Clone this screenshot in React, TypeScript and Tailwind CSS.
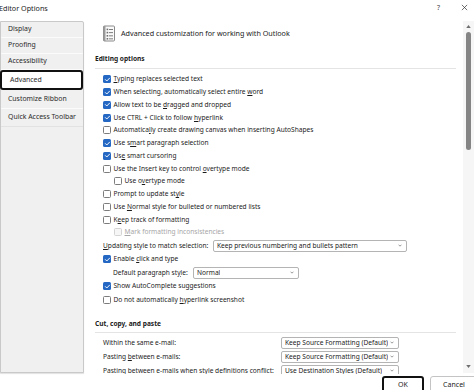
import React from 'react'

type Row =
  | { kind: 'check'; label: React.ReactNode; checked?: boolean; indent?: boolean; disabled?: boolean }
  | { kind: 'select'; label: React.ReactNode; value: string; indent?: boolean; labelW: string; selW: string }

const font = { fontFamily: '"Segoe UI", "Noto Sans", sans-serif' }

function Box({ checked, disabled }: { checked?: boolean; disabled?: boolean }) {
  if (checked) {
    return (
      <span className="w-[8px] h-[8px] shrink-0 rounded-[1.5px] bg-[#2468c4] flex items-center justify-center">
        <svg viewBox="0 0 8 8" className="w-[7px] h-[7px]">
          <path d="M1.6 4.1 L3.2 5.7 L6.4 2.4" stroke="white" strokeWidth="1.1" fill="none" strokeLinecap="round" strokeLinejoin="round" />
        </svg>
      </span>
    )
  }
  return (
    <span
      className={`w-[8px] h-[8px] shrink-0 rounded-[1.5px] border ${
        disabled ? 'border-[#d4d4d4] bg-[#f6f6f6]' : 'border-[#7c7c7c] bg-white'
      }`}
    />
  )
}

function Chevron() {
  return (
    <svg viewBox="0 0 6 4" className="w-[4px] h-[3px] shrink-0">
      <path d="M0.8 0.8 L3 3 L5.2 0.8" stroke="#555" strokeWidth="0.9" fill="none" />
    </svg>
  )
}

function Select({ value, className }: { value: string; className: string }) {
  return (
    <div
      className={`${className} h-[12px] border border-[#b4b4b4] rounded-[2px] bg-white flex items-center justify-between pl-[3px] pr-[4px] text-[#1a1a1a]`}
    >
      <span className="whitespace-nowrap overflow-hidden">{value}</span>
      <Chevron />
    </div>
  )
}

const editing: Row[] = [
  { kind: 'check', checked: true, label: <><u>T</u>yping replaces selected text</> },
  { kind: 'check', checked: true, label: <>When selecting, automatically select entire <u>w</u>ord</> },
  { kind: 'check', checked: true, label: <>Allow text to be <u>d</u>ragged and dropped</> },
  { kind: 'check', checked: true, label: <>Use CTRL + Click to follow <u>h</u>yperlink</> },
  { kind: 'check', label: <>Automatica<u>l</u>ly create drawing canvas when inserting AutoShapes</> },
  { kind: 'check', checked: true, label: <>Use s<u>m</u>art paragraph selection</> },
  { kind: 'check', checked: true, label: <>Us<u>e</u> smart cursoring</> },
  { kind: 'check', label: <>Use the Insert key to control <u>o</u>vertype mode</> },
  { kind: 'check', indent: true, label: <>Use o<u>v</u>ertype mode</> },
  { kind: 'check', label: <>Prompt to update st<u>y</u>le</> },
  { kind: 'check', label: <>Use <u>N</u>ormal style for bulleted or numbered lists</> },
  { kind: 'check', label: <>K<u>e</u>ep track of formatting</> },
  { kind: 'check', indent: true, disabled: true, label: <><u>M</u>ark formatting inconsistencies</> },
]

export default function App() {
  return (
    <div className="w-[474px] h-[390px] bg-white overflow-hidden flex flex-col text-[6.6px] text-[#1b1b1b]" style={font}>
      {/* Title bar */}
      <div className="h-[21px] shrink-0 flex items-start pt-[3px]">
        <span className="text-[7.2px] text-[#1b1b1b] -ml-[1px] leading-[10px]">Editor Options</span>
        <span className="ml-auto text-[7px] text-[#444] leading-[10px]">?</span>
        <span className="ml-[21px] mr-[6px] text-[#444] leading-[10px]">
          <svg viewBox="0 0 8 8" className="w-[7px] h-[7px] mt-[1px]">
            <path d="M1 1 L7 7 M7 1 L1 7" stroke="#333" strokeWidth="0.8" />
          </svg>
        </span>
      </div>

      {/* Body */}
      <div className="h-[353px] shrink-0 flex">
        {/* Sidebar */}
        <div className="w-[84px] h-[352px] shrink-0 bg-[#f0f0f0] border border-[#c9c9c9] rounded-tr-[2px] shadow-[0_1px_1px_rgba(0,0,0,0.12)] flex flex-col text-[6.9px] text-[#2b2b2b]">
          <div className="h-[16px] flex items-center pl-[7px] border-b border-[#fbfbfb]">Display</div>
          <div className="h-[16px] flex items-center pl-[7px] border-b border-[#fbfbfb]">Proofing</div>
          <div className="h-[16px] flex items-center pl-[7px] border-b border-[#fbfbfb]">Accessibility</div>
          <div className="h-[20px] -ml-[1px] flex items-center pl-[8px] bg-white border-2 border-[#111] rounded-[3px]">Advanced</div>
          <div className="h-[19px] flex items-center pl-[7px] border-b border-[#fbfbfb]">Customize Ribbon</div>
          <div className="h-[18px] flex items-center pl-[7px] border-b border-[#e2e2e2]">Quick Access Toolbar</div>
        </div>

        {/* Main pane */}
        <div className="flex-1 flex overflow-hidden">
          <div className="flex-1 overflow-hidden pl-[11px] pr-[7px] flex flex-col">
            {/* Header */}
            <div className="mt-[3px] h-[18px] shrink-0 flex items-center pl-[7px] gap-[5px]">
              <svg viewBox="0 0 14 17" className="w-[14px] h-[17px]">
                <rect x="1.5" y="1" width="11" height="15" rx="1" fill="#fafafa" stroke="#7d7d7d" strokeWidth="0.9" />
                <rect x="1.5" y="1" width="2" height="15" fill="#9a9a9a" />
                <rect x="4.6" y="3.6" width="1.6" height="1.6" fill="#6f6f6f" />
                <rect x="7" y="4" width="4" height="0.9" fill="#6f6f6f" />
                <rect x="4.6" y="6.8" width="1.6" height="1.6" fill="#6f6f6f" />
                <rect x="7" y="7.2" width="4" height="0.9" fill="#6f6f6f" />
                <rect x="4.6" y="10" width="1.6" height="1.6" fill="#6f6f6f" />
                <rect x="7" y="10.4" width="4" height="0.9" fill="#6f6f6f" />
                <rect x="4.6" y="13" width="1.6" height="1.6" fill="#6f6f6f" />
                <rect x="7" y="13.4" width="4" height="0.9" fill="#6f6f6f" />
              </svg>
              <span className="text-[7.2px] whitespace-nowrap">Advanced customization for working with Outlook</span>
            </div>

            {/* Editing options */}
            <div className="mt-[11px] h-[12px] shrink-0 flex items-center font-bold">Editing options</div>
            <div className="mt-[3px] h-px shrink-0 bg-[#e4e4e4]" />
            <div className="mt-[4px] flex flex-col shrink-0">
              {editing.map((r, i) =>
                r.kind === 'check' ? (
                  <div
                    key={i}
                    className={`h-[12.75px] flex items-center gap-[2.5px] whitespace-nowrap ${r.indent ? 'pl-[19px]' : 'pl-[8px]'} ${
                      r.disabled ? 'text-[#a6a6a6]' : ''
                    }`}
                  >
                    <Box checked={r.checked} disabled={r.disabled} />
                    <span>{r.label}</span>
                  </div>
                ) : null
              )}
              <div className="h-[14px] flex items-center pl-[8px] whitespace-nowrap">
                <span className="w-[110px]"><u>U</u>pdating style to match selection:</span>
                <Select className="w-[194px]" value="Keep previous numbering and bullets pattern" />
              </div>
              <div className="h-[13px] flex items-center gap-[2.5px] pl-[8px] whitespace-nowrap">
                <Box checked />
                <span>Enable <u>c</u>lick and type</span>
              </div>
              <div className="h-[14px] flex items-center pl-[18px] whitespace-nowrap">
                <span className="w-[80px]">Default paragraph st<u>y</u>le:</span>
                <Select className="w-[106px]" value="Normal" />
              </div>
              <div className="h-[13px] flex items-center gap-[2.5px] pl-[8px] whitespace-nowrap">
                <Box checked />
                <span>Show AutoComplete suggestions</span>
              </div>
              <div className="mt-[1px] h-[13px] flex items-center gap-[2.5px] pl-[8px] whitespace-nowrap">
                <Box />
                <span>Do not automatically <u>h</u>yperlink screenshot</span>
              </div>
            </div>

            {/* Cut, copy, and paste */}
            <div className="mt-[11px] h-[12px] shrink-0 flex items-center font-bold">Cut, copy, and paste</div>
            <div className="mt-[2px] h-px shrink-0 bg-[#e4e4e4]" />
            <div className="mt-[3px] flex flex-col shrink-0">
              <div className="h-[14px] flex items-center pl-[8px] whitespace-nowrap">
                <span className="w-[178px]">Within the same e-mail:</span>
                <Select className="w-[118px]" value="Keep Source Formatting (Default)" />
              </div>
              <div className="h-[14px] flex items-center pl-[8px] whitespace-nowrap">
                <span className="w-[178px]">Pasting <u>b</u>etween e-mails:</span>
                <Select className="w-[118px]" value="Keep Source Formatting (Default)" />
              </div>
              <div className="h-[14px] flex items-center pl-[8px] whitespace-nowrap">
                <span className="w-[178px]">Pasting between e-mails when style definitions conflict:</span>
                <Select className="w-[118px]" value="Use Destination Styles (Default)" />
              </div>
            </div>
          </div>

          {/* Scrollbar */}
          <div className="w-[11px] h-[352px] shrink-0 bg-[#f6f6f6] flex flex-col items-center">
            <svg viewBox="0 0 6 4" className="w-[5px] h-[3px] mt-[4px]">
              <path d="M0 4 L3 0 L6 4 Z" fill="#6e6e6e" />
            </svg>
            <div className="mt-[4px] w-[5px] h-[118px] rounded-full bg-[#858585]" />
            <div className="flex-1" />
            <svg viewBox="0 0 6 4" className="w-[5px] h-[3px] mb-[5px]">
              <path d="M0 0 L3 4 L6 0 Z" fill="#6e6e6e" />
            </svg>
          </div>
        </div>
      </div>

      {/* Footer */}
      <div className="flex-1 flex items-start justify-end gap-[6px] pt-[2px] -mr-[4px]">
        <div className="w-[42px] h-[18px] shrink-0 border-2 border-[#111] rounded-[3px] bg-white flex items-center justify-center text-[7px]">
          OK
        </div>
        <div className="w-[48px] h-[18px] shrink-0 border border-[#c4c4c4] rounded-[3px] bg-white flex items-center justify-center text-[7px]">
          Cancel
        </div>
      </div>
    </div>
  )
}
